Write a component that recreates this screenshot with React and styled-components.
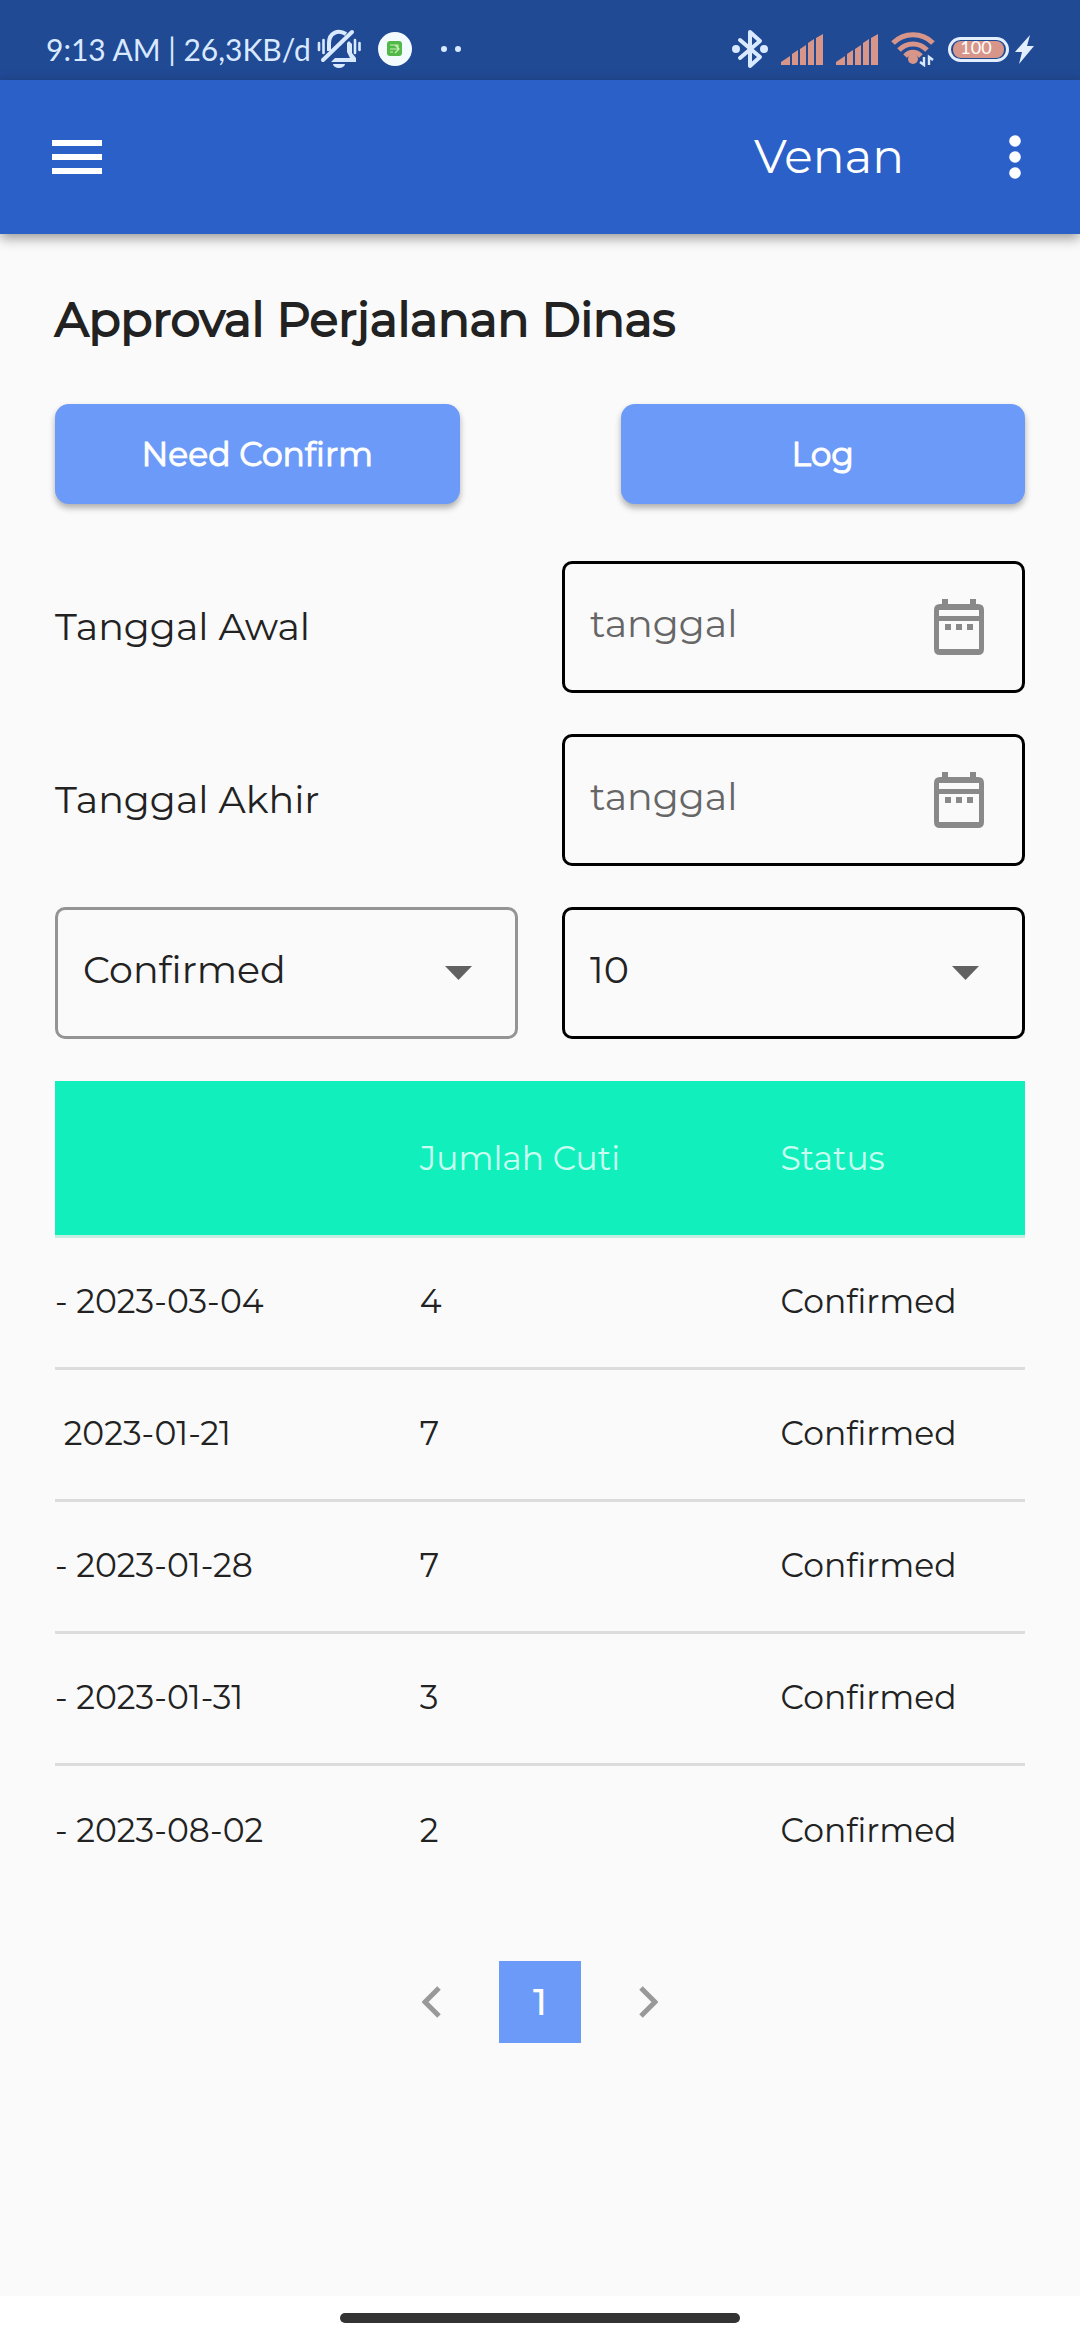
import React from 'react';
import styled, { createGlobalStyle } from 'styled-components';

const GlobalStyle = createGlobalStyle`
  * { box-sizing: border-box; }
  body { margin: 0; background: #fafafa; }
  button, input, select { font: inherit; color: inherit; }
`;

const Screen = styled.div`
  min-height: 100vh;
  display: flex;
  flex-direction: column;
  background: #fafafa;
  color: #222;
  font-family: Montserrat, Inter, 'Noto Sans', sans-serif;
  font-size: 38px;
  line-height: 44px;
`;

const StatusBar = styled.div`
  height: 80px;
  padding: 18px 46px 0;
  display: flex;
  align-items: center;
  justify-content: space-between;
  background: #214a95;
  color: #d9e9ff;
`;

const StatusGroup = styled.div`
  display: flex;
  align-items: center;
  gap: ${(p) => p.$gap}px;
`;

const Clock = styled.span`
  font-family: Lato, sans-serif;
  font-size: 30px;
`;

const AppBar = styled.header`
  height: 154px;
  padding: 0 38px 0 40px;
  display: flex;
  align-items: center;
  justify-content: space-between;
  background: #2a60c7;
  color: #fff;
  box-shadow: 0 4px 12px rgba(0, 0, 0, 0.4);
`;

const AppBarEnd = styled.div`
  display: flex;
  align-items: center;
  gap: 84px;
`;

const UserName = styled.span`
  font-size: 47px;
`;

const IconButton = styled.button`
  border: 0;
  padding: 0;
  background: none;
  display: grid;
  place-items: center;
  width: ${(p) => p.$width}px;
  height: 74px;
`;

const Content = styled.main`
  flex: 1;
  padding: 56px 55px;
`;

const Title = styled.h1`
  margin: 0 0 54px;
  font-size: 47px;
  line-height: 60px;
  font-weight: 400;
  -webkit-text-stroke: 2px currentColor;
`;

const Tabs = styled.div`
  display: grid;
  grid-template-columns: 1fr 1fr;
  gap: 161px;
  margin-bottom: 57px;
`;

const TabButton = styled.button`
  height: 100px;
  border: 0;
  border-radius: 14px;
  background: #6c9af8;
  color: #fff;
  font-size: 33px;
  -webkit-text-stroke: 1px currentColor;
  box-shadow: 0 4px 6px rgba(0, 0, 0, 0.3);
`;

const Form = styled.form`
  display: grid;
  grid-template-columns: repeat(2, minmax(0, 1fr));
  align-items: center;
  gap: 41px 44px;
  margin-bottom: 42px;
`;

const Label = styled.label`
  min-width: 0;
`;

const Field = styled.div`
  height: 132px;
  display: flex;
  position: relative;
  border: 3px solid ${(p) => (p.$muted ? '#949494' : '#000')};
  border-radius: 10px;
`;

const DateInput = styled.input`
  flex: 1;
  min-width: 0;
  border: 0;
  outline: 0;
  padding: 0 90px 6px 25px;
  background: none;
  &::placeholder { color: #666; opacity: 1; }
`;

const Select = styled.select`
  flex: 1;
  min-width: 0;
  appearance: none;
  border: 0;
  outline: 0;
  padding: 0 90px 6px 25px;
  background: none;
`;

const FieldIcon = styled.span`
  position: absolute;
  right: ${(p) => p.$right}px;
  top: 0;
  bottom: 0;
  display: grid;
  place-items: center;
  pointer-events: none;
`;

const Table = styled.table`
  width: 100%;
  table-layout: fixed;
  border-collapse: collapse;
  font-size: 33px;
`;

const HeadRow = styled.tr`
  height: 155px;
  border-bottom: 3px solid #c4eee2;
`;

const HeadCell = styled.th`
  padding: 0;
  width: ${(p) => p.$width};
  background: #11f0bc;
  color: #c9fff1;
  text-align: left;
  font-weight: 400;
`;

const Row = styled.tr`
  height: 132px;
  border-bottom: ${(p) => (p.$last ? 0 : '3px solid #dcdcdc')};
`;

const Cell = styled.td`
  padding: 0 0 2px;
  white-space: pre;
  overflow: hidden;
`;

const Pagination = styled.nav`
  margin-top: 65px;
  display: flex;
  align-items: center;
  justify-content: center;
  gap: 26px;
`;

const PageButton = styled.button`
  width: 82px;
  height: 82px;
  border: 0;
  padding: 0;
  display: grid;
  place-items: center;
  background: ${(p) => (p.$current ? '#6c9af8' : 'none')};
  color: ${(p) => (p.$current ? '#fff' : '#999')};
  font-weight: 500;
`;

const NavBar = styled.footer`
  height: 44px;
  display: grid;
  place-items: center;
  background: #fff;
`;

const HomePill = styled.div`
  width: 37%;
  height: 10px;
  border-radius: 5px;
  background: #333;
`;

const MutedBell = () => (
  <svg width="44" height="40" viewBox="0 0 44 40" fill="none" stroke="#d9e9ff" strokeWidth="4">
    <path d="M12 22V14C12 4 21 0 29 5" />
    <path d="M32 12L35 15V24L39 29V33H14L18 29H33L30 23V14Z" fill="#d9e9ff" stroke="none" />
    <path d="M6 31L35 3" strokeLinecap="round" />
    <path d="M2 14v7M6.500 11v13M38 11v13M42.500 14v7" strokeWidth="2.6" strokeLinecap="round" />
    <path d="M16 35h12a6 4 0 0 1-12 0Z" fill="#d9e9ff" stroke="none" />
  </svg>
);

const AppBadge = () => (
  <svg width="34" height="34" viewBox="0 0 34 34">
    <circle cx="17" cy="17" r="17" fill="#f4fbff" />
    <rect x="9" y="9" width="15" height="15" rx="3" fill="#52b848" />
    <path d="M12 13h8v3M12 17h9M17 13l4 4-4 4M12 20h3" fill="none" stroke="#c8f0b8" strokeWidth="1.2" />
  </svg>
);

const MoreDots = () => (
  <svg width="20" height="8" viewBox="0 0 20 8" fill="#d9e9ff">
    <circle cx="3" cy="4" r="3" />
    <circle cx="17" cy="4" r="3" />
  </svg>
);

const Bluetooth = () => (
  <svg width="36" height="40" viewBox="0 0 36 40" fill="none" stroke="#d9e9ff" strokeWidth="4" strokeLinecap="round" strokeLinejoin="round">
    <path d="M8 11L28 28 18 37V3L28 12 8 29" />
    <circle cx="4" cy="20" r="2" fill="#d9e9ff" />
    <circle cx="32" cy="20" r="2" fill="#d9e9ff" />
  </svg>
);

const Signal = () => (
  <svg width="42" height="31" viewBox="0 0 42 31" fill="#d8968a">
    <path d="M0 31V28L9 22V31ZM11 31V20L17 16V31ZM19 31V15L25 11V31ZM27 31V9L33 5V31ZM35 31V4L42 0V31Z" />
  </svg>
);

const Wifi = () => (
  <svg width="44" height="36" viewBox="0 0 44 36" fill="none" stroke="#d8968a" strokeWidth="5">
    <path d="M2 12C13 1 31 1 42 12M8 19C16 11 28 11 36 19M14 25C19 20 25 20 30 25" />
    <circle cx="22" cy="28" r="5" fill="#d8968a" stroke="none" />
    <path d="M33 26v8l-4-3M38 34v-8l4 3" stroke="#d9e9ff" strokeWidth="2.400" />
  </svg>
);

const Battery = () => (
  <svg width="61" height="29" viewBox="0 0 61 29">
    <rect x="1.500" y="3.500" width="58" height="22" rx="11" fill="none" stroke="#e3efff" strokeWidth="3" />
    <rect x="5" y="6" width="51" height="17" rx="8" fill="#d8968a" />
    <text x="28" y="19" textAnchor="middle" fill="#fff" fontFamily="Lato, sans-serif" fontSize="18">100</text>
  </svg>
);

const Bolt = () => (
  <svg width="19" height="29" viewBox="0 0 19 29" fill="#e3efff">
    <path d="M15 0L0 17h7L4 29 19 11h-7Z" />
  </svg>
);

const Menu = () => (
  <svg width="50" height="34" viewBox="0 0 50 34" fill="#fff">
    <path d="M0 0H50V6H0ZM0 14H50V20H0ZM0 28H50V34H0Z" />
  </svg>
);

const Kebab = () => (
  <svg width="12" height="44" viewBox="0 0 12 44" fill="#fff">
    <circle cx="6" cy="6" r="5.800" />
    <circle cx="6" cy="22" r="5.800" />
    <circle cx="6" cy="38" r="5.800" />
  </svg>
);

const Calendar = () => (
  <svg width="50" height="56" viewBox="0 0 50 56" fill="#898989">
    <path fillRule="evenodd" d="M8 0H14V5H36V0H42V5H44Q50 5 50 11V50Q50 56 44 56H6Q0 56 0 50V11Q0 5 6 5H8ZM5 11V17H45V11ZM5 22V50H45V22Z" />
    <path d="M11 25H17V31H11ZM22 25H28V31H22ZM33 25H39V31H33Z" />
  </svg>
);

const Caret = () => (
  <svg width="27" height="14" viewBox="0 0 27 14" fill="#616161">
    <path d="M0 0H27L13.500 14Z" />
  </svg>
);

const Chevron = ({ d }) => (
  <svg width="20" height="32" viewBox="0 0 20 32" fill="none" stroke="currentColor" strokeWidth="5">
    <path d={d} />
  </svg>
);

const dates = [
  { id: 'start', label: 'Tanggal Awal' },
  { id: 'end', label: 'Tanggal Akhir' },
];

const rows = [
  ['- 2023-03-04', 4],
  [' 2023-01-21', 7],
  ['- 2023-01-28', 7],
  ['- 2023-01-31', 3],
  ['- 2023-08-02', 2],
];

export default function App() {
  return (
    <Screen>
      <GlobalStyle />
      <StatusBar>
        <StatusGroup $gap={17}>
          <StatusGroup $gap={6}>
            <Clock>9:13 AM | 26,3KB/d</Clock>
            <MutedBell />
          </StatusGroup>
          <StatusGroup $gap={29}>
            <AppBadge />
            <MoreDots />
          </StatusGroup>
        </StatusGroup>
        <StatusGroup $gap={13}>
          <Bluetooth />
          <Signal />
          <Signal />
          <Wifi />
          <StatusGroup $gap={6}>
            <Battery />
            <Bolt />
          </StatusGroup>
        </StatusGroup>
      </StatusBar>
      <AppBar>
        <IconButton $width={74} aria-label="Menu"><Menu /></IconButton>
        <AppBarEnd>
          <UserName>Venan</UserName>
          <IconButton $width={54} aria-label="More"><Kebab /></IconButton>
        </AppBarEnd>
      </AppBar>
      <Content>
        <Title>Approval Perjalanan Dinas</Title>
        <Tabs>
          <TabButton>Need Confirm</TabButton>
          <TabButton>Log</TabButton>
        </Tabs>
        <Form>
          {dates.map(({ id, label }) => (
            <React.Fragment key={id}>
              <Label htmlFor={id}>{label}</Label>
              <Field>
                <DateInput id={id} placeholder="tanggal" />
                <FieldIcon $right={38}><Calendar /></FieldIcon>
              </Field>
            </React.Fragment>
          ))}
          <Field $muted>
            <Select aria-label="Status" defaultValue="Confirmed">
              <option>Confirmed</option>
            </Select>
            <FieldIcon $right={43}><Caret /></FieldIcon>
          </Field>
          <Field>
            <Select aria-label="Rows" defaultValue="10">
              <option>10</option>
            </Select>
            <FieldIcon $right={43}><Caret /></FieldIcon>
          </Field>
        </Form>
        <Table>
          <thead>
            <HeadRow>
              <HeadCell $width="37.6%" />
              <HeadCell $width="37.2%">Jumlah Cuti</HeadCell>
              <HeadCell>Status</HeadCell>
            </HeadRow>
          </thead>
          <tbody>
            {rows.map(([date, days], i) => (
              <Row key={date} $last={i === rows.length - 1}>
                <Cell>{date}</Cell>
                <Cell>{days}</Cell>
                <Cell>Confirmed</Cell>
              </Row>
            ))}
          </tbody>
        </Table>
        <Pagination aria-label="Pages">
          <PageButton aria-label="Previous"><Chevron d="M17 2L3 16 17 30" /></PageButton>
          <PageButton $current>1</PageButton>
          <PageButton aria-label="Next"><Chevron d="M3 2L17 16 3 30" /></PageButton>
        </Pagination>
      </Content>
      <NavBar><HomePill /></NavBar>
    </Screen>
  );
}
